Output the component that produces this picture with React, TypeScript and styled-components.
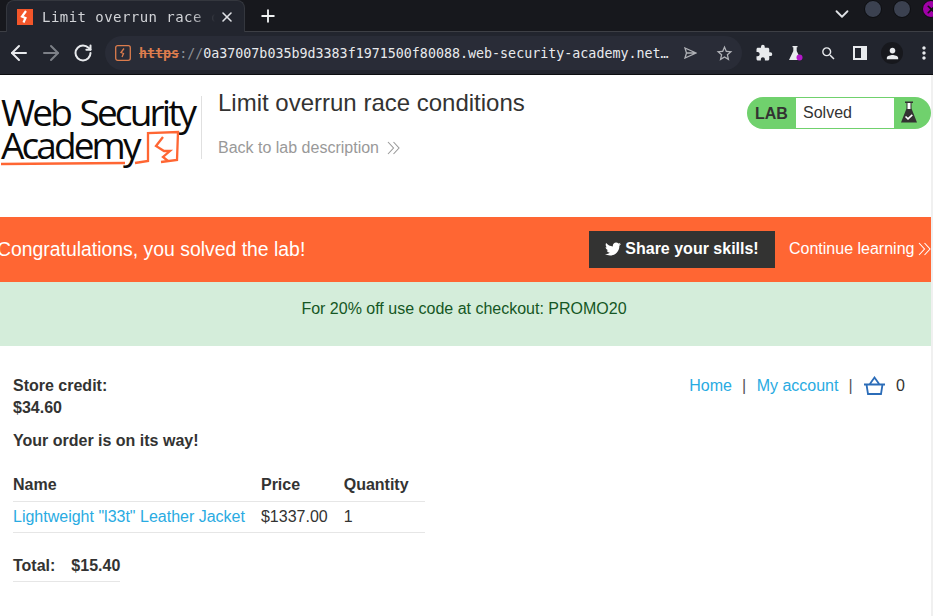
import React from 'react';
import styled, { createGlobalStyle } from 'styled-components';
import { ArrowLeft, ArrowRight, RotateCw, Plus, X, ChevronDown } from 'lucide-react';
import { FaTwitter } from 'react-icons/fa';
import { MdExtension, MdMoreVert, MdPerson, MdSearch, MdStarBorder } from 'react-icons/md';

const GlobalStyle = createGlobalStyle`
	html, body {
		margin: 0;
		padding: 0;
		height: 616px;
		overflow: hidden;
		background: #f0f0f0;
		font-family: "Liberation Sans", Arial, sans-serif;
		color: #333332;
	}
	* {
		box-sizing: border-box;
	}
`;

const TabStrip = styled.div`
	height: 31px;
	background: #17181d;
	display: flex;
	padding-left: 6px;
	color: #dfe1e5;
`;

const Tab = styled.div`
	width: 239px;
	height: 32px;
	position: relative;
	z-index: 1;
	background: #22252e;
	border-radius: 8px 8px 0 0;
	border: 1px solid #34373e;
	border-bottom: none;
	display: flex;
	align-items: center;
	padding-left: 10px;
`;

const TabTitle = styled.span`
	font-family: "DejaVu Sans Mono", monospace;
	font-size: 14px;
	letter-spacing: 0.45px;
	color: #d2d4d8;
	width: 177px;
	margin-left: 9px;
	white-space: nowrap;
	overflow: hidden;
	mask-image: linear-gradient(to right, #000 150px, transparent 173px);
`;

const NewTab = styled.div`
	width: 46px;
	display: flex;
	justify-content: center;
	align-self: center;
	color: #f1f3f4;
`;

const WindowControls = styled.div`
	margin-left: auto;
	display: flex;
	align-items: flex-start;
	gap: 11px;
	margin-right: -7px;
`;

const WindowChevron = styled.div`
	display: flex;
	margin-top: 3px;
`;

const WindowDot = styled.div<{ $close?: boolean }>`
	width: 18px;
	height: 18px;
	border-radius: 50%;
	background: ${p => (p.$close ? '#a000a8' : '#3b4150')};
	border: 1px solid #0c0d10;
	display: flex;
	align-items: center;
	justify-content: center;
	color: #111;
`;

const Toolbar = styled.div`
	height: 44px;
	background: #22252e;
	border-top: 1px solid #3d3f45;
	border-bottom: 1px solid #0c0d10;
	display: flex;
	align-items: center;
	padding-left: 3px;
	color: #e8eaed;
	overflow: hidden;
`;

const NavButton = styled.div<{ $dim?: boolean }>`
	width: 32px;
	flex: none;
	display: flex;
	justify-content: center;
	color: ${p => (p.$dim ? '#7d8087' : '#e8eaed')};
`;

const Omnibox = styled.div`
	width: 637px;
	height: 34px;
	flex: none;
	margin-left: 6px;
	border-radius: 17px;
	background: #292c37;
	display: flex;
	align-items: center;
	padding-left: 10px;
	font-family: "DejaVu Sans Mono", monospace;
	font-size: 13.33px;
	white-space: nowrap;
`;

const Scheme = styled.span`
	color: #dc7c4d;
	text-decoration: line-through;
	margin-left: 8px;
	font-weight: 700;
`;

const SchemeSep = styled.span`
	color: #8d9096;
`;

const Host = styled.span`
	color: #e8eaed;
	width: 466px;
	flex: none;
	overflow: hidden;
	text-overflow: ellipsis;
`;

const OmniIcons = styled.div`
	display: flex;
	align-items: center;
	gap: 18px;
	margin-left: 15px;
	color: #b0b2b7;
`;

const ToolIcons = styled.div`
	display: flex;
	flex: none;
	align-items: center;
	margin-left: 6px;
	color: #e8eaed;
`;

const ToolSlot = styled.div`
	width: 32px;
	flex: none;
	display: flex;
	justify-content: center;
`;

const Avatar = styled.div`
	width: 22px;
	height: 22px;
	border-radius: 50%;
	background: #17181d;
	display: flex;
	align-items: center;
	justify-content: center;
`;

const Page = styled.div`
	width: 931px;
	height: 541px;
	background: #fff;
`;

const Header = styled.header`
	height: 142px;
	display: flex;
	align-items: flex-start;
	padding-top: 21px;
`;

const Logo = styled.div`
	width: 202px;
	height: 63px;
	border-right: 1px solid #e0e0e0;
	flex-shrink: 0;
	position: relative;
`;

const LogoText = styled.div`
	margin-top: -1px;
	padding-left: 1px;
	font-family: "Open Sans", sans-serif;
	font-weight: 500;
	color: #0a0a0a;
	font-size: 37px;
	line-height: 33px;
	letter-spacing: -2.9px;
	word-spacing: 3px;
	white-space: nowrap;
`;

const LogoMark = styled.svg`
	position: absolute;
	left: 0;
	top: 32px;
`;

const HeaderMain = styled.div`
	padding-left: 16px;
	width: 545px;
`;

const Title = styled.h2`
	margin: -8px 0 0;
	font-size: 24px;
	line-height: 30px;
	font-weight: 400;
	color: #333332;
`;

const BackLink = styled.a`
	display: flex;
	align-items: center;
	gap: 8px;
	margin-top: 20px;
	font-size: 16px;
	line-height: 20px;
	color: #999;
`;

const LabBadge = styled.div`
	width: 184px;
	height: 32px;
	margin-top: 1px;
	background: #70d16d;
	border-radius: 16px;
	display: flex;
	align-items: stretch;
	padding: 1px 0;
`;

const LabLabel = styled.div`
	width: 49px;
	padding-left: 8px;
	font-weight: 700;
	font-size: 16px;
	line-height: 32px;
	color: #333332;
`;

const LabStatus = styled.div`
	width: 98px;
	background: #fff;
	padding-left: 7px;
	font-size: 16px;
	line-height: 30px;
	color: #333332;
`;

const LabFlask = styled.div`
	flex: 1;
	padding: 3px 0 0 7px;
`;

const Congrats = styled.section`
	height: 65px;
	background: #ff6633;
	display: flex;
	align-items: center;
	color: #fff;
`;

const CongratsText = styled.h4`
	flex: none;
	margin: 0 0 0 -3px;
	width: 592px;
	font-size: 19.4px;
	font-weight: 400;
`;

const ShareButton = styled.a`
	flex: none;
	width: 186px;
	height: 37px;
	padding-bottom: 2px;
	background: #333332;
	color: #fff;
	font-weight: 700;
	font-size: 16px;
	display: flex;
	align-items: center;
	justify-content: center;
	gap: 4px;
`;

const ContinueLink = styled.a`
	flex: none;
	margin-left: 14px;
	padding-bottom: 2px;
	font-size: 16px;
	display: flex;
	align-items: center;
	gap: 4px;
	white-space: nowrap;
`;

const Notice = styled.section`
	height: 64px;
	padding-right: 3px;
	background: #d4edda;
	color: #155724;
	font-size: 16px;
	text-align: center;
	line-height: 54px;
`;

const Content = styled.main`
	padding: 29px 13px 0;
	display: flex;
	justify-content: space-between;
	align-items: flex-start;
	line-height: 22px;
	font-size: 16px;
`;

const Orders = styled.div`
	width: 412px;
`;

const Strong = styled.p<{ $gap?: number }>`
	margin: 0 0 ${p => p.$gap ?? 0}px;
	font-weight: 700;
`;

const OrderTable = styled.table`
	border-collapse: collapse;
	margin-top: 18px;
	th, td {
		text-align: left;
		padding: 4px 16px 5px 0;
		border-bottom: 1px solid #e6e6e6;
		white-space: nowrap;
	}
	td {
		padding-bottom: 4px;
	}
`;

const TotalTable = styled.table`
	border-collapse: collapse;
	margin-top: 17px;
	font-weight: 700;
	th {
		text-align: left;
		padding: 5px 16px 4px 0;
		border-bottom: 1px solid #e6e6e6;
	}
	th:last-child {
		padding-right: 0;
	}
`;

const BlueLink = styled.a`
	color: #29abe2;
`;

const AccountNav = styled.nav`
	display: flex;
	align-items: center;
	margin: 0 13px 0 0;
	height: 22px;
`;

const Pipe = styled.span`
	margin: 0 10.5px 0 10px;
	color: #555;
`;

const CartCount = styled.span`
	margin-left: 10px;
`;

const Chevrons = ({ color }: { color: string }) => (
	<svg width="13" height="14" viewBox="0 0 13 14" fill="none" stroke={color} strokeWidth="1.1">
		<path d="M1 1l5.5 6L1 13M6.500 1L12 7l-5.500 6" />
	</svg>
);

const Favicon = () => (
	<svg width="16" height="16" viewBox="0 0 16 16">
		<rect width="16" height="16" fill="#f3562a" />
		<path d="M9 2L5 7.500l3.500 1.500-2 4.500" fill="none" stroke="#fff" strokeWidth="2.200" />
	</svg>
);

const LockedIcon = () => (
	<svg width="16" height="16" viewBox="0 0 16 16" fill="none" stroke="#dc7c4d">
		<rect x="0.700" y="0.700" width="14.600" height="14.600" rx="2" strokeWidth="1.300" />
		<path d="M9 3.500L6 7.500l2.500 1-1.500 3.500" strokeWidth="1.300" />
	</svg>
);

const SendIcon = () => (
	<svg width="13" height="12" viewBox="0 0 13 12" fill="none" stroke="currentColor" strokeWidth="1.300">
		<path d="M1 1l11 5-11 5 1.500-5zM2.500 6H12" />
	</svg>
);

const LabsIcon = () => (
	<svg width="16" height="17" viewBox="0 0 16 17">
		<path d="M4.500 1h5v1.200H8.700V6L13 15H1L5.300 6V2.200h-.8z" fill="#e8eaed" />
		<circle cx="11.500" cy="12.500" r="3" fill="#b318c9" />
	</svg>
);

const SidePanelIcon = () => (
	<svg width="14" height="14" viewBox="0 0 14 14">
		<rect width="14" height="14" fill="#e8eaed" />
		<rect x="2" y="2" width="6" height="10" fill="#22252e" />
	</svg>
);

const FlaskIcon = () => (
	<svg width="16" height="22" viewBox="0 0 16 22">
		<path d="M4 .5h8v1.500h-1.500v5.500L16 21.500H0L5.500 7.500V2H4z" fill="#333332" />
		<path d="M6.500 2h3v6h-3z" fill="#fff" />
		<path d="M4.500 15.500l2.500 2.300 4.300-4" fill="none" stroke="#fff" strokeWidth="1.600" />
	</svg>
);

const CartIcon = () => (
	<svg width="23" height="20" viewBox="0 0 23 20" fill="none" stroke="#2b6cb8" strokeWidth="1.800">
		<path d="M1 8.500h21M3.500 8.500l1.500 9.500h13l1.500-9.500M6.500 8.500L11.500 1.500l5 7" />
	</svg>
);

const App: React.FunctionComponent<{}> = () => (
	<>
		<GlobalStyle />
		<TabStrip>
			<Tab>
				<Favicon />
				<TabTitle>Limit overrun race conditions</TabTitle>
				<X size={16} strokeWidth={2.400} />
			</Tab>
			<NewTab>
				<Plus size={20} strokeWidth={2.200} />
			</NewTab>
			<WindowControls>
				<WindowChevron>
					<ChevronDown size={22} strokeWidth={2} />
				</WindowChevron>
				<WindowDot />
				<WindowDot />
				<WindowDot $close>
					<X size={13} strokeWidth={3} />
				</WindowDot>
			</WindowControls>
		</TabStrip>
		<Toolbar>
			<NavButton>
				<ArrowLeft size={24} strokeWidth={2} />
			</NavButton>
			<NavButton $dim>
				<ArrowRight size={24} strokeWidth={2} />
			</NavButton>
			<NavButton>
				<RotateCw size={20} strokeWidth={2.400} />
			</NavButton>
			<Omnibox>
				<LockedIcon />
				<Scheme>https</Scheme>
				<SchemeSep>://</SchemeSep>
				<Host>0a37007b035b9d3383f1971500f80088.web-security-academy.net/cart/order-confirmation</Host>
				<OmniIcons>
					<SendIcon />
					<MdStarBorder size={19} />
				</OmniIcons>
			</Omnibox>
			<ToolIcons>
				<ToolSlot>
					<MdExtension size={18} />
				</ToolSlot>
				<ToolSlot>
					<LabsIcon />
				</ToolSlot>
				<ToolSlot>
					<MdSearch size={17} />
				</ToolSlot>
				<ToolSlot>
					<SidePanelIcon />
				</ToolSlot>
				<ToolSlot>
					<Avatar>
						<MdPerson size={17} />
					</Avatar>
				</ToolSlot>
				<ToolSlot>
					<MdMoreVert size={20} />
				</ToolSlot>
			</ToolIcons>
		</Toolbar>
		<Page>
			<Header>
				<Logo>
					<LogoText>
						Web Security
						<br />
						Academy
					</LogoText>
					<LogoMark width="180" height="40" viewBox="0 0 180 40" fill="none" stroke="#ff6633" strokeWidth="2.300">
						<path d="M1 36L125 35M135 35L148 33V5L178 4L177 32L161 34" />
						<path d="M163 9L156 18L164 23H170L163 29L168 33" />
					</LogoMark>
				</Logo>
				<HeaderMain>
					<Title>Limit overrun race conditions</Title>
					<BackLink>
						Back to lab description
						<Chevrons color="#999" />
					</BackLink>
				</HeaderMain>
				<LabBadge>
					<LabLabel>LAB</LabLabel>
					<LabStatus>Solved</LabStatus>
					<LabFlask>
						<FlaskIcon />
					</LabFlask>
				</LabBadge>
			</Header>
			<Congrats>
				<CongratsText>Congratulations, you solved the lab!</CongratsText>
				<ShareButton>
					<FaTwitter size={16} />
					Share your skills!
				</ShareButton>
				<ContinueLink>
					Continue learning
					<Chevrons color="#fff" />
				</ContinueLink>
			</Congrats>
			<Notice>For 20% off use code at checkout: PROMO20</Notice>
			<Content>
				<Orders>
					<Strong>Store credit:</Strong>
					<Strong $gap={11}>$34.60</Strong>
					<Strong>Your order is on its way!</Strong>
					<OrderTable>
						<thead>
							<tr>
								<th>Name</th>
								<th>Price</th>
								<th>Quantity</th>
							</tr>
						</thead>
						<tbody>
							<tr>
								<td>
									<BlueLink>Lightweight "l33t" Leather Jacket</BlueLink>
								</td>
								<td>$1337.00</td>
								<td>1</td>
							</tr>
						</tbody>
					</OrderTable>
					<TotalTable>
						<tbody>
							<tr>
								<th>Total:</th>
								<th>$15.40</th>
							</tr>
						</tbody>
					</TotalTable>
				</Orders>
				<AccountNav>
					<BlueLink>Home</BlueLink>
					<Pipe>|</Pipe>
					<BlueLink>My account</BlueLink>
					<Pipe>|</Pipe>
					<CartIcon />
					<CartCount>0</CartCount>
				</AccountNav>
			</Content>
		</Page>
	</>
);

export default App;
